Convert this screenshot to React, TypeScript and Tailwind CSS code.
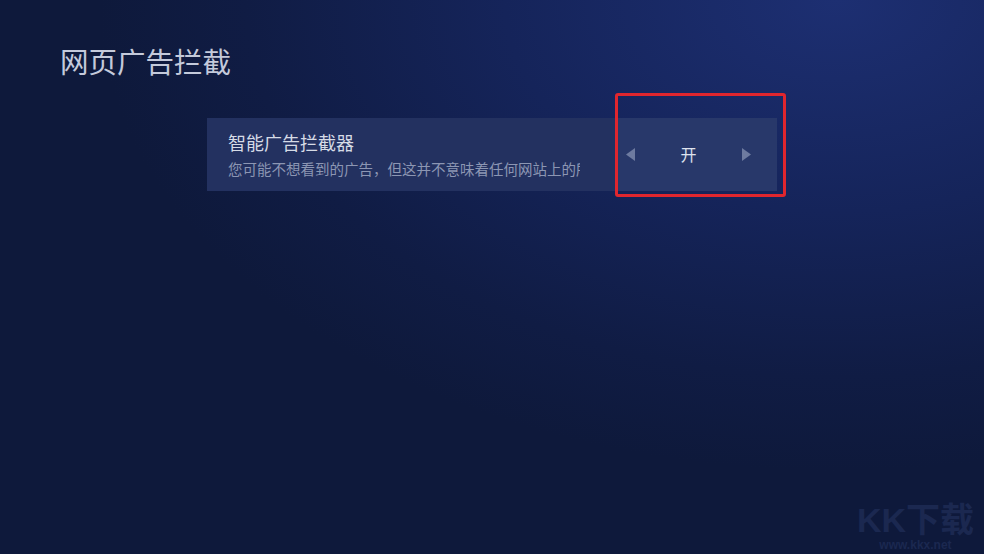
export default function App() {
  return (
    <div
      className="relative h-[554px] w-full overflow-hidden bg-[radial-gradient(ellipse_75%_85%_at_85%_0%,#1d2f72_0%,#15245a_45%,#101c44_80%,#0e193b_100%)] text-[#c9cfdd]"
      style={{ fontFamily: '"Noto Sans", "Noto Sans CJK SC", sans-serif' }}
    >
      <div className="pl-[60px] pt-[44px]">
        <h1 className="text-[28.5px] leading-[36px] text-[#c4cadb]">网页广告拦截</h1>

        <div className="relative ml-[147px] mt-[38px] flex h-[73px] w-[570px]">
          <div className="flex w-[409px] flex-col justify-center gap-[4px] bg-[#233160] pl-[21px] pr-[36px]">
            <div className="text-[18px] leading-[24px] text-[#d6dbe6]">智能广告拦截器</div>
            <div className="overflow-hidden whitespace-nowrap text-[14.5px] leading-[20px] text-[#8c96b3]">
              您可能不想看到的广告，但这并不意味着任何网站上的所有广告都会被拦截
            </div>
          </div>
          <div className="flex flex-1 items-center justify-between bg-[#28386a] pl-[10px] pr-[26px]">
            <svg width="9" height="13" viewBox="0 0 9 13">
              <path d="M9 0 L0 6.5 L9 13 Z" fill="#6e7ba0" />
            </svg>
            <span className="text-[16px] text-[#dfe3ee]">开</span>
            <svg width="9" height="13" viewBox="0 0 9 13">
              <path d="M0 0 L9 6.5 L0 13 Z" fill="#6e7ba0" />
            </svg>
          </div>
          <div className="pointer-events-none absolute left-[408px] top-[-25px] h-[104px] w-[171px] rounded-[3px] border-[3px] border-[#e0262e]" />
        </div>
      </div>

      <div className="pointer-events-none absolute bottom-[2px] right-[10px] flex flex-col items-center text-[#1b2850]">
        <span className="text-[34px] font-bold leading-[36px]" style={{ fontFamily: '"Liberation Sans", "Noto Sans CJK SC", sans-serif' }}>KK下载</span>
        <span className="text-[12px] font-bold leading-[14px]" style={{ fontFamily: '"Liberation Sans", sans-serif' }}>www.kkx.net</span>
      </div>
    </div>
  );
}
